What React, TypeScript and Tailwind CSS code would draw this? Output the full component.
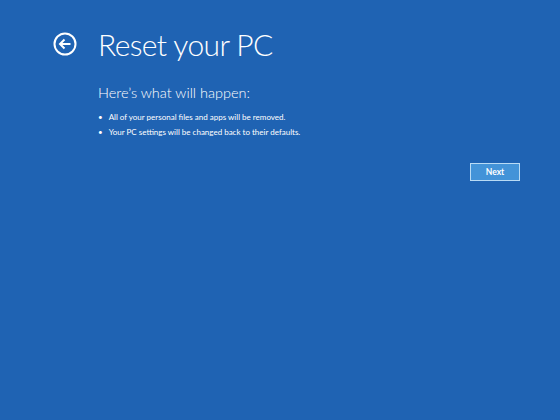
export default function App() {
  return (
    <div
      className="w-[560px] h-[420px] bg-[#1f63b3] text-white overflow-hidden"
      style={{ fontFamily: 'Lato, "Open Sans", sans-serif' }}
    >
      {/* header */}
      <div className="flex items-center pt-[22px] pl-[53px]">
        <svg width="24" height="24" viewBox="0 0 24 24" fill="none" stroke="white" strokeWidth="2">
          <circle cx="12" cy="12" r="10.5" />
          <path d="M17.5 12H7M11.5 7.5L7 12l4.5 4.5" />
        </svg>
        <h1 className="ml-[21px] text-[30px] font-light leading-[44px] tracking-[-0.6px]">Reset your PC</h1>
      </div>

      <div className="pl-[98px] pr-[40px] mt-[17px]">
        <h2 className="text-[14.5px] font-light leading-[20px]">Here’s what will happen:</h2>
        <ul className="mt-[7px] text-[8px] leading-[15px]">
          <li className="flex gap-[6px]">
            <span>•</span>
            <span>All of your personal files and apps will be removed.</span>
          </li>
          <li className="flex gap-[6px]">
            <span>•</span>
            <span>Your PC settings will be changed back to their defaults.</span>
          </li>
        </ul>
      </div>

      <div className="flex justify-end pr-[40px] mt-[23px]">
        <button className="w-[50px] h-[18px] bg-[#4393d8] border border-[#b9dbf5] text-[8.5px] font-bold leading-none">
          Next
        </button>
      </div>
    </div>
  );
}
